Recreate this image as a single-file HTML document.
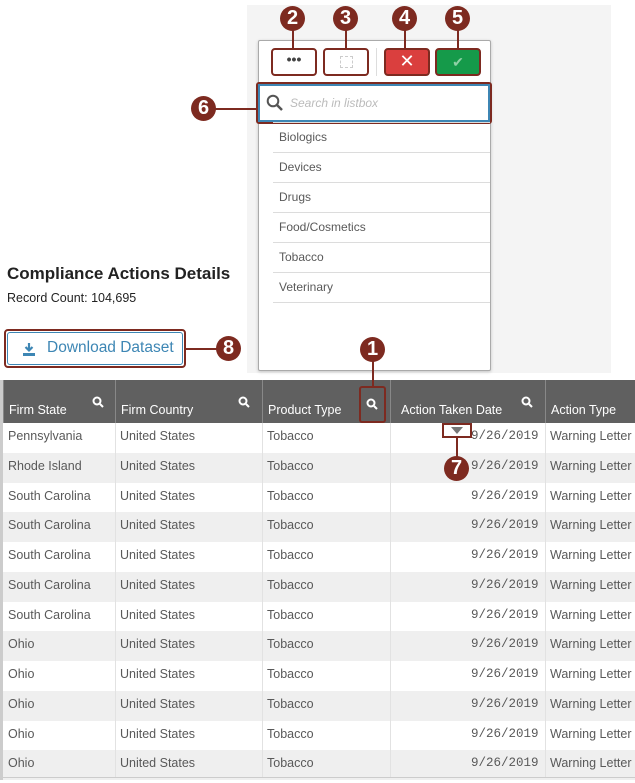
<!DOCTYPE html>
<html><head><meta charset="utf-8"><style>
*{box-sizing:border-box;margin:0;padding:0}
body{width:635px;height:783px;background:#fff;position:relative;overflow:hidden;font-family:"Liberation Sans",sans-serif}
.a{position:absolute}
.b{position:absolute;width:25px;height:25px;border-radius:50%;background:#7d2a20;color:#fff;font-weight:bold;font-size:20px;text-align:center;line-height:25px}
.ln{position:absolute;background:#7d2a20}
.btn{position:absolute;top:48px;width:46px;height:28px;border:2px solid #7d2a20;border-radius:4px;background:#fff}
.li{position:absolute;left:273px;width:217px;height:30px;border-bottom:1px solid #dcdcdc;font-size:12px;color:#595959;padding:7px 0 0 6px}
.hd{position:absolute;top:380px;height:43px;color:#fff;font-size:12.5px;padding:23px 0 0 5px;border-left:1px solid #888}
.row{position:absolute;left:3px;width:632px;height:29.75px;font-size:12.5px;color:#595959}
.row div{position:absolute;top:6px}
.cl{position:absolute;top:423px;width:1px;height:355px;background:#e2e2e2}
</style></head><body>
<div class="a" style="left:247px;top:5px;width:364px;height:368px;background:#f4f4f4"></div>
<div class="a" style="left:258px;top:40px;width:233px;height:331px;background:#fff;border:1px solid #aaa;border-radius:2px;box-shadow:0 1px 3px rgba(0,0,0,.2)"></div>
<div class="btn" style="left:271px;font-size:14px;font-weight:bold;text-align:center;line-height:18px;color:#444">•••</div>
<div class="btn" style="left:323px"><div class="a" style="left:15px;top:6px;width:13px;height:12px;border:1px dashed #ccc"></div></div>
<div class="a" style="left:376px;top:48px;width:1px;height:28px;background:#ddd"></div>
<div class="btn" style="left:384px;background:#da3f3e;color:#fff;text-align:center;font-size:18px;line-height:22px">✕</div>
<div class="btn" style="left:435px;background:#159a4a;color:#8fd0a5;text-align:center;font-size:14px;line-height:24px">✔</div>
<div class="a" style="left:256px;top:82px;width:236px;height:42px;border:2px solid #7d2a20;border-radius:3px"></div>
<div class="a" style="left:258px;top:84px;width:232px;height:38px;border:2px solid #3d86b4;background:#fff;font-size:12px;font-style:italic;color:#bbb;padding:10px 0 0 30px">Search in listbox
<svg class="a" style="left:6px;top:8px" width="18" height="18" viewBox="0 0 18 18"><circle cx="7" cy="7" r="5.3" fill="none" stroke="#555" stroke-width="2"/><path d="M11 11l5 5" stroke="#555" stroke-width="2.5"/></svg></div>
<div class="a" style="left:273px;top:122px;width:217px;height:1px;background:#dcdcdc"></div>
<div class="li" style="top:123px">Biologics</div>
<div class="li" style="top:153px">Devices</div>
<div class="li" style="top:183px">Drugs</div>
<div class="li" style="top:213px">Food/Cosmetics</div>
<div class="li" style="top:243px">Tobacco</div>
<div class="li" style="top:273px">Veterinary</div>

<div class="a" style="left:7px;top:264px;font-size:17px;font-weight:bold;color:#222">Compliance Actions Details</div>
<div class="a" style="left:7px;top:291px;font-size:12.5px;color:#222">Record Count: 104,695</div>
<div class="a" style="left:4px;top:329px;width:182px;height:39px;border:2px solid #7d2a20;border-radius:4px"></div>
<div class="a" style="left:7px;top:332px;width:176px;height:33px;border:1px solid #3d86b4;border-radius:3px;background:#fff;color:#3d86b4;font-size:15.5px;padding:6px 0 0 39px">Download Dataset
<svg class="a" style="left:14px;top:10px" width="14" height="13" viewBox="0 0 14 13"><path d="M7 0v7M3.5 4l3.5 3.5L10.5 4" stroke="#3d86b4" stroke-width="2.2" fill="none"/><rect x="1" y="10" width="12" height="3" fill="#3d86b4"/></svg></div>

<div class="a" style="left:0;top:380px;width:635px;height:43px;background:#606060"></div>
<div class="hd" style="left:3px;width:112px">Firm State</div>
<div class="hd" style="left:115px;width:147px">Firm Country</div>
<div class="hd" style="left:262px;width:128px">Product Type</div>
<div class="hd" style="left:390px;width:155px;padding-left:10px">Action Taken Date</div>
<div class="hd" style="left:545px;width:90px">Action Type</div>
<div class="a" style="left:0;top:380px;width:3px;height:400px;background:#ccc"></div>
<div id="r"></div>
<svg class="a" style="left:0;top:395px" width="635" height="16"><g stroke="#fff" stroke-width="2" fill="none"><circle cx="97" cy="6" r="3.5"/><path d="M100 9l3 3"/><circle cx="243" cy="6" r="3.5"/><path d="M246 9l3 3"/><circle cx="371" cy="8" r="3.5"/><path d="M374 11l3 3"/><circle cx="526" cy="6" r="3.5"/><path d="M529 9l3 3"/></g></svg>
<div class="a" style="left:359px;top:386px;width:27px;height:37px;border:2px solid #7d2a20;border-radius:3px"></div>
<div class="a" style="left:442px;top:423px;width:30px;height:15px;border:2px solid #7d2a20"></div>
<div class="a" style="left:451px;top:427px;width:0;height:0;border-left:6px solid transparent;border-right:6px solid transparent;border-top:7px solid #777"></div>

<div class="ln" style="left:292px;top:30px;width:2px;height:18px"></div>
<div class="ln" style="left:345px;top:30px;width:2px;height:18px"></div>
<div class="ln" style="left:404px;top:30px;width:2px;height:18px"></div>
<div class="ln" style="left:457px;top:30px;width:2px;height:18px"></div>
<div class="ln" style="left:214px;top:108px;width:43px;height:2px"></div>
<div class="ln" style="left:372px;top:360px;width:2px;height:26px"></div>
<div class="ln" style="left:456px;top:438px;width:2px;height:22px"></div>
<div class="ln" style="left:186px;top:348px;width:32px;height:2px"></div>
<div class="b" style="left:280px;top:6px">2</div>
<div class="b" style="left:333px;top:6px">3</div>
<div class="b" style="left:392px;top:6px">4</div>
<div class="b" style="left:445px;top:6px">5</div>
<div class="b" style="left:191px;top:96px">6</div>
<div class="b" style="left:360px;top:337px">1</div>
<div class="b" style="left:444px;top:456px">7</div>
<div class="b" style="left:216px;top:336px">8</div>
<script>
var s=["Pennsylvania","Rhode Island","South Carolina","South Carolina","South Carolina","South Carolina","South Carolina","Ohio","Ohio","Ohio","Ohio","Ohio"],h="";
for(var i=0;i<12;i++){h+='<div class="row" style="top:'+(423+i*29.75)+'px;background:'+(i%2?'#efefef':'#fff')+'"><div style="left:5px">'+s[i]+'</div><div style="left:117px">United States</div><div style="left:264px">Tobacco</div><div style="left:468px;font-family:\'Liberation Mono\',monospace;font-size:12.5px">9/26/2019</div><div style="left:547px;white-space:nowrap">Warning Letter</div></div>';}
[115,262,390,545].forEach(function(x){h+='<div class="cl" style="left:'+x+'px"></div>'});
h+='<div class="a" style="left:0;top:777px;width:635px;height:1px;background:#ccc"></div>';
document.getElementById("r").outerHTML=h;
</script>
</body></html>
